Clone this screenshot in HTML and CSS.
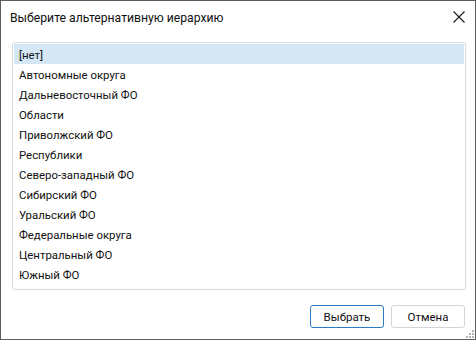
FILE: index.html
```html
<!DOCTYPE html>
<html lang="ru">
<head>
<meta charset="utf-8">
<title>Выберите альтернативную иерархию</title>
<link rel="stylesheet" href="styles.css">
</head>
<body>
<div class="window">
  <div class="titlebar">
    <div class="title">Выберите альтернативную иерархию</div>
    <div class="close">
      <svg width="12" height="12" viewBox="0 0 12 12"><path d="M0.5 0.5 L11.5 11.5 M11.5 0.5 L0.5 11.5" stroke="#1a1a1a" stroke-width="1.1" fill="none"/></svg>
    </div>
  </div>
  <div class="content">
    <div class="listbox">
      <div class="item selected">[нет]</div>
      <div class="item">Автономные округа</div>
      <div class="item">Дальневосточный ФО</div>
      <div class="item">Области</div>
      <div class="item">Приволжский ФО</div>
      <div class="item">Республики</div>
      <div class="item">Северо-западный ФО</div>
      <div class="item">Сибирский ФО</div>
      <div class="item">Уральский ФО</div>
      <div class="item">Федеральные округа</div>
      <div class="item">Центральный ФО</div>
      <div class="item">Южный ФО</div>
    </div>
  </div>
  <div class="footer">
    <button class="btn primary">Выбрать</button>
    <button class="btn">Отмена</button>
  </div>
  <div class="grip">
    <span class="d d1"></span>
    <span class="d d2"></span><span class="d d3"></span>
    <span class="d d4"></span><span class="d d5"></span><span class="d d6"></span>
  </div>
</div>
</body>
</html>
```
FILE: styles.css
```css
html, body {
  margin: 0;
  padding: 0;
  background: #ffffff;
}
.window {
  position: relative;
  box-sizing: border-box;
  width: 476px;
  height: 340px;
  border: 1px solid #5c5c5c;
  background: #ffffff;
  display: flex;
  flex-direction: column;
  font-family: Roboto, "Noto Sans", sans-serif;
  color: #111111;
}
.titlebar {
  height: 32px;
  display: flex;
  align-items: center;
  justify-content: space-between;
  padding: 0 10px 0 9px;
}
.title {
  font-size: 12.2px;
  padding-top: 1px;
}
.close {
  width: 12px;
  height: 12px;
  display: flex;
}
.content {
  padding: 9px 9px 0 11px;
}
.listbox {
  box-sizing: border-box;
  height: 248px;
  border: 1px solid #dadada;
  border-radius: 3px;
  padding: 1px;
  display: flex;
  flex-direction: column;
}
.item {
  box-sizing: border-box;
  height: 20px;
  line-height: 20px;
  font-size: 11.4px;
  padding: 1px 0 0 5px;
}
.item.selected {
  background: #d5e6f5;
}
.footer {
  display: flex;
  justify-content: flex-end;
  gap: 7px;
  padding: 15px 10px 0 0;
}
.btn {
  box-sizing: border-box;
  width: 74px;
  height: 23px;
  border: 1px solid #d4d4d4;
  border-radius: 3px;
  background: #ffffff;
  font-family: Roboto, "Noto Sans", sans-serif;
  font-size: 11.5px;
  color: #111111;
  padding: 0;
}
.btn.primary {
  border-color: #2a7ac4;
}
.grip {
  position: absolute;
  right: 1px;
  bottom: 1px;
  width: 8px;
  height: 8px;
}
.d {
  position: absolute;
  width: 2px;
  height: 2px;
  background: #b4b4b4;
}
.d1 { left: 6px; top: 0; }
.d2 { left: 3px; top: 3px; }
.d3 { left: 6px; top: 3px; }
.d4 { left: 0; top: 6px; }
.d5 { left: 3px; top: 6px; }
.d6 { left: 6px; top: 6px; }
```
